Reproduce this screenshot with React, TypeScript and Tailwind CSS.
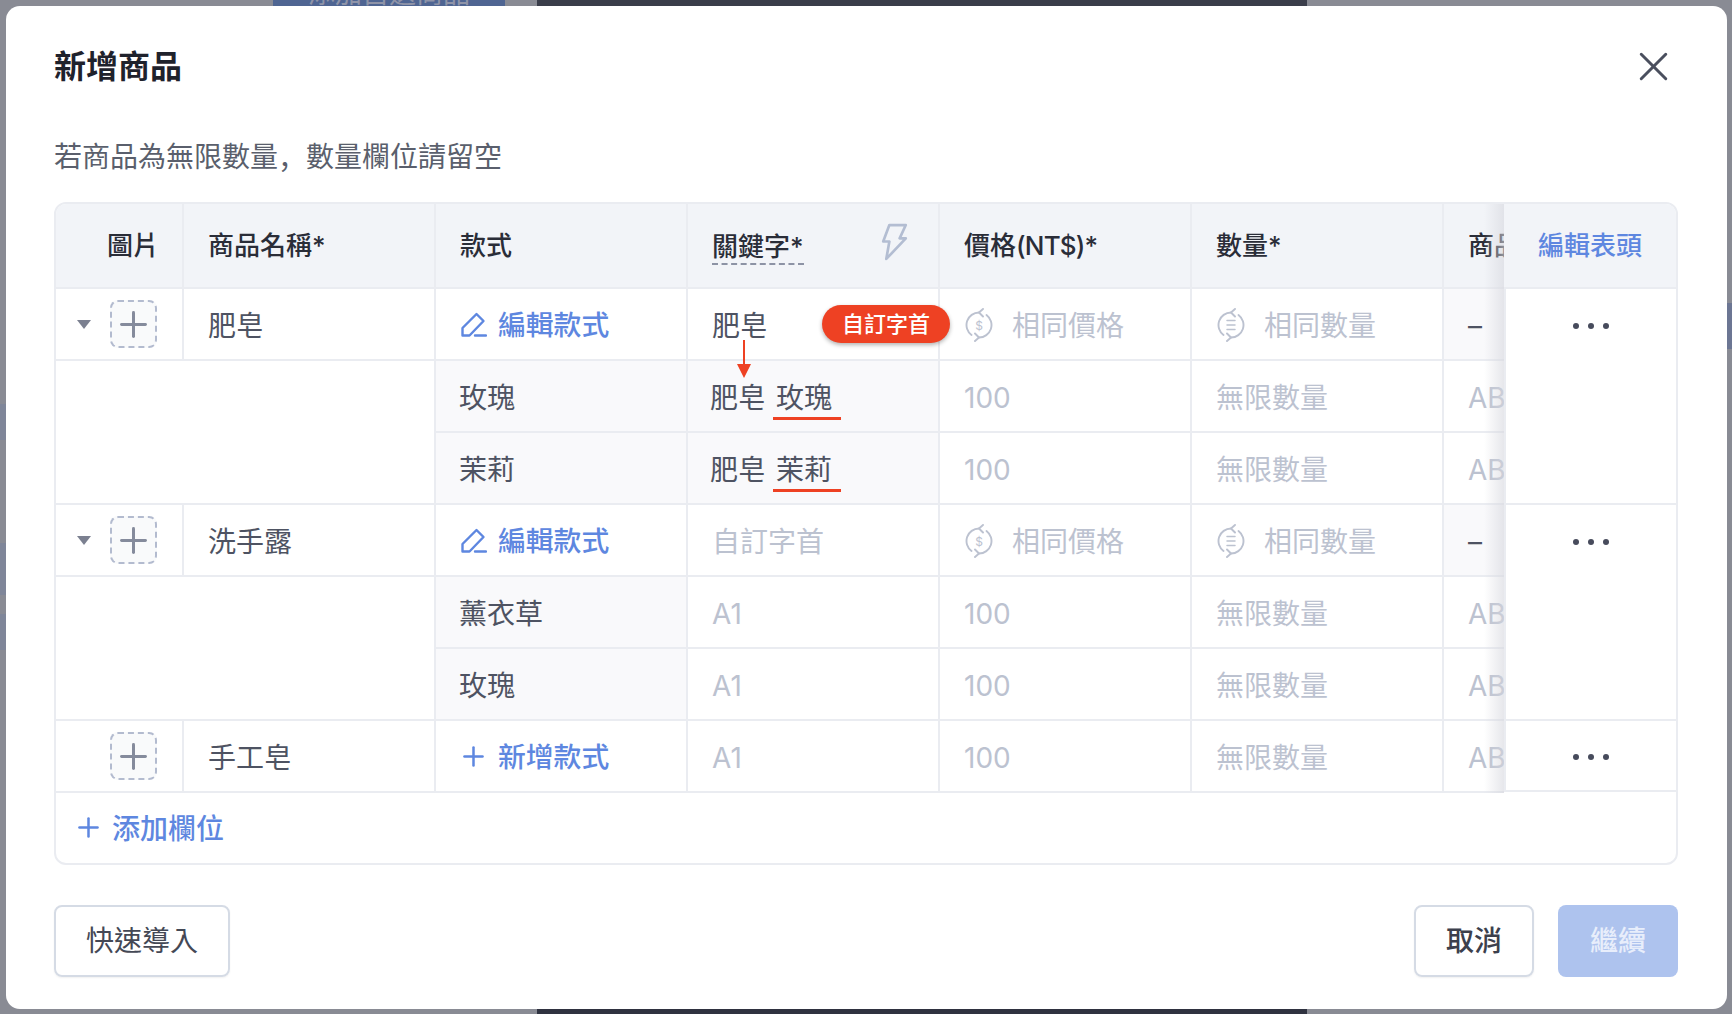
import React from 'react';
import { Plus, X } from 'lucide-react';

const font = 'font-["Inter","Noto_Sans_CJK_TC",sans-serif]';
const line = 'border-r-2 border-b-2 border-[#eaecf1]';
const cell = `${line} flex items-center pl-[24px] pt-[4px] text-[#4e5362]`;
const ghost = `${line} flex items-center pl-[24px] pt-[4px] text-[#bcc2d0]`;
const variant = `${line} flex items-center pt-[4px] text-[#4e5362] bg-[#f9f9fb]`;
const link = 'flex items-center text-[#5e87e0] font-medium text-[27.8px]';

const Caret = () => (
  <svg width="14" height="9" viewBox="0 0 14 9" className="shrink-0">
    <path d="M0 0H14L7 9Z" fill="#7b8090" />
  </svg>
);

const ImageCell = ({ caret }: { caret?: boolean }) => (
  <div className={`${line} flex items-center pl-[21px]`}>
    <div className="w-[14px] mr-[19px]">{caret && <Caret />}</div>
    <div className="w-[47px] h-[48px] rounded-[8px] border-2 border-dashed border-[#b3bbcf] bg-[#f9fafb] flex items-center justify-center">
      <Plus size={41} strokeWidth={1.75} className="text-[#858b9c] shrink-0" />
    </div>
  </div>
);

const EditLink = () => (
  <div className={`${line} ${link} pt-[4px] pl-[25px]`}>
    <svg width="26" height="25" viewBox="0 0 26 25" fill="none" stroke="#5e87e0" strokeWidth="2.4" strokeLinejoin="round" strokeLinecap="round" className="mr-[11px] -mt-[3px]">
      <path d="M1.5 23.5V16L15.5 2L22.5 9L8.5 23.5Z" />
      <path d="M14 23.5H25" />
    </svg>
    編輯款式
  </div>
);

const Cycle = ({ children }: { children: React.ReactNode }) => (
  <svg width="28" height="34" viewBox="0 0 28 34" fill="none" stroke="#bcc2d0" strokeWidth="1.9" strokeLinecap="round" strokeLinejoin="round" className="mr-[19px] -mt-[3px] shrink-0">
    <path d="M14 4.5A12.5 12.5 0 0 0 6.5 27" />
    <path d="M18 1L14 4.5L18 8.5" />
    <path d="M14 29.5A12.5 12.5 0 0 0 21.5 7" />
    <path d="M10 25.5L14 29.5L10 33" />
    {children}
  </svg>
);

const SamePrice = () => (
  <div className={`${ghost} pl-[25px]`}>
    <Cycle>
      <text x="14" y="21.5" fontSize="12" textAnchor="middle" fill="#bcc2d0" stroke="none">$</text>
    </Cycle>
    相同價格
  </div>
);

const SameQty = () => (
  <div className={`${ghost} pl-[25px]`}>
    <Cycle>
      <path d="M10 12.5H18M10 17H18M10 21.5H18" strokeWidth="1.5" />
    </Cycle>
    相同數量
  </div>
);

const Marked = ({ children }: { children: React.ReactNode }) => (
  <span className="relative ml-[10px]">
    {children}
    <span className="absolute left-[-3px] right-[-9px] top-[40px] h-[3px] bg-[#ee4123]" />
  </span>
);

const Dots = () => (
  <div className="h-[73px] flex items-center justify-center gap-[9px]">
    <span className="w-[6px] h-[6px] rounded-full bg-[#474b5c]" />
    <span className="w-[6px] h-[6px] rounded-full bg-[#474b5c]" />
    <span className="w-[6px] h-[6px] rounded-full bg-[#474b5c]" />
  </div>
);

const Qty = () => <div className={ghost}>無限數量</div>;
const Sku = () => <div className={ghost}>AB</div>;
const Hundred = () => <div className={ghost}>100</div>;
const Head = ({ children }: { children: React.ReactNode }) => (
  <div className={`${line} flex items-center pl-[24px] text-[#2a2d38] font-medium text-[26px]`}>{children}</div>
);

export default function App() {
  return (
    <div className={`${font} relative h-[1014px] w-[1732px] overflow-hidden bg-[#898b94]`}>
      {/* dimmed page behind the dialog */}
      <div className="absolute left-[273px] top-0 w-[232px] h-[6px] overflow-hidden bg-[#4f6592] text-center text-[27px] leading-[27px] text-[#8f94a8]">
        <div className="-mt-[20px]">添加自選商品</div>
      </div>
      <div className="absolute left-[537px] top-0 w-[770px] h-[6px] bg-[#3a3d4a]" />
      <div className="absolute left-[537px] bottom-0 w-[770px] h-[5px] bg-[#2f3240]" />
      <div className="absolute left-0 top-[404px] w-[6px] h-[36px] bg-[#7f8699]" />
      <div className="absolute left-0 top-[543px] w-[6px] h-[52px] bg-[#7f8699]" />
      <div className="absolute left-0 top-[614px] w-[6px] h-[36px] bg-[#7f8699]" />
      <div className="absolute right-0 top-[303px] w-[5px] h-[46px] bg-[#6c7693]" />

      <div className="absolute left-[6px] top-[6px] w-[1721px] h-[1003px] rounded-[14px] bg-white pt-[33px] pl-[48px] pr-[49px]">
        <div className="h-[54px] flex items-center justify-between">
          <h1 className="text-[32px] font-bold text-[#1f222c] pt-[2px]">新增商品</h1>
          <X size={49} strokeWidth={1.47} className="text-[#4a4f5e]" />
        </div>
        <p className="mt-[39px] h-[48px] flex items-center pt-[2px] text-[28px] text-[#5a5f6c]">
          若商品為無限數量<span className='font-["Noto_Sans_CJK_SC"]'>，</span>數量欄位請留空
        </p>

        <div className="mt-[22px] h-[663px] rounded-[12px] border-2 border-[#eaecf1] overflow-hidden text-[28px]">
          <div className="flex">
            <div className="w-[1448px] overflow-hidden">
              <div className="grid w-max grid-cols-[128px_repeat(6,252px)] grid-rows-[85px] auto-rows-[72px]">
                <div className={`${line} bg-[#f2f4f8] flex items-center justify-end pr-[23px] text-[#2a2d38] font-medium text-[26px]`}>圖片</div>
                <div className="contents [&>div]:bg-[#f2f4f8]">
                  <Head>商品名稱*</Head>
                  <Head>款式</Head>
                  <Head>
                    <span className="border-b-2 border-dashed border-[#8d93a5] pt-[3px] leading-[33px]">關鍵字*</span>
                    <svg width="27" height="38" viewBox="0 0 26 37" fill="none" stroke="#b3bdd2" strokeWidth="2.6" strokeLinejoin="round" className="ml-auto mr-[30px] mb-[8px]">
                      <path d="M8 2H24L18 15H24L5 35L8 18H2Z" />
                    </svg>
                  </Head>
                  <Head>
                    <span>價格<span className="tracking-[-0.8px]">(NT$)*</span></span>
                  </Head>
                  <Head>數量*</Head>
                  <Head>商品編號</Head>
                </div>

                <ImageCell caret />
                <div className={cell}>肥皂</div>
                <EditLink />
                <div className={`${cell} relative`}>
                  肥皂
                  <span className="absolute left-[134px] top-[16px] w-[128px] h-[38px] z-10 rounded-full bg-[#ee4123] text-white text-[22px] font-medium flex items-center justify-center shadow-[0_2px_4px_rgba(0,0,0,0.3)]">
                    自訂字首
                  </span>
                  <svg width="16" height="38" viewBox="0 0 16 38" className="absolute left-[48px] top-[51px] z-10">
                    <path d="M7 0H9V24H15L8 38L1 24H7Z" fill="#ee4123" />
                  </svg>
                </div>
                <SamePrice />
                <SameQty />
                <div className={`${cell} bg-[#f9f9fb]`}>–</div>

                <div className={`${line} col-span-2 row-span-2`} />
                <div className={`${variant} pl-[23px]`}>玫瑰</div>
                <div className={`${variant} pl-[22px]`}>
                  肥皂<Marked>玫瑰</Marked>
                </div>
                <Hundred />
                <Qty />
                <Sku />

                <div className={`${variant} pl-[23px]`}>茉莉</div>
                <div className={`${variant} pl-[22px]`}>
                  肥皂<Marked>茉莉</Marked>
                </div>
                <Hundred />
                <Qty />
                <Sku />

                <ImageCell caret />
                <div className={cell}>洗手露</div>
                <EditLink />
                <div className={ghost}>自訂字首</div>
                <SamePrice />
                <SameQty />
                <div className={`${cell} bg-[#f9f9fb]`}>–</div>

                <div className={`${line} col-span-2 row-span-2`} />
                <div className={`${variant} pl-[23px]`}>薰衣草</div>
                <div className={ghost}>A1</div>
                <Hundred />
                <Qty />
                <Sku />

                <div className={`${variant} pl-[23px]`}>玫瑰</div>
                <div className={ghost}>A1</div>
                <Hundred />
                <Qty />
                <Sku />

                <ImageCell />
                <div className={cell}>手工皂</div>
                <div className={`${line} ${link} pt-[4px] pl-[22px]`}>
                  <Plus size={31} strokeWidth={1.94} className="mr-[9px] -mt-[3px]" />
                  新增款式
                </div>
                <div className={ghost}>A1</div>
                <Hundred />
                <Qty />
                <Sku />
              </div>
            </div>

            <div className="relative flex-1">
              <div className="absolute right-full top-0 bottom-0 w-[20px] bg-gradient-to-r from-transparent to-[#d6d7de]/60" />
              <div className="h-[85px] border-b-2 border-[#eaecf1] bg-[#f2f4f8] flex items-center justify-center text-[#5e87e0] text-[26px] font-medium">編輯表頭</div>
              <div className="h-[216px] border-b-2 border-[#eaecf1] border-l-2"><Dots /></div>
              <div className="h-[216px] border-b-2 border-[#eaecf1] border-l-2"><Dots /></div>
              <div className="h-[72px] border-b-2 border-[#eaecf1] border-l-2"><div className="-mt-[1px]"><Dots /></div></div>
            </div>
          </div>
          <div className={`${link} h-[70px] pt-[2px] pl-[17px] text-[28px]`}>
            <Plus size={31} strokeWidth={1.94} className="mr-[8px] -mt-[3px]" />
            添加欄位
          </div>
        </div>

        <div className="mt-[40px] h-[72px] flex items-stretch justify-between text-[28px]">
          <button className="w-[176px] rounded-[8px] border-2 border-[#d5dbe5] text-[#444855] shadow-[0_1px_2px_rgba(0,0,0,0.06)]">快速導入</button>
          <div className="flex gap-[24px]">
            <button className="w-[120px] rounded-[8px] border-2 border-[#d5dbe5] text-[#3c404c] font-medium shadow-[0_1px_2px_rgba(0,0,0,0.06)]">取消</button>
            <button className="w-[120px] rounded-[8px] bg-[#aec3ee] text-[#e8eefb] font-medium">繼續</button>
          </div>
        </div>
      </div>
    </div>
  );
}
